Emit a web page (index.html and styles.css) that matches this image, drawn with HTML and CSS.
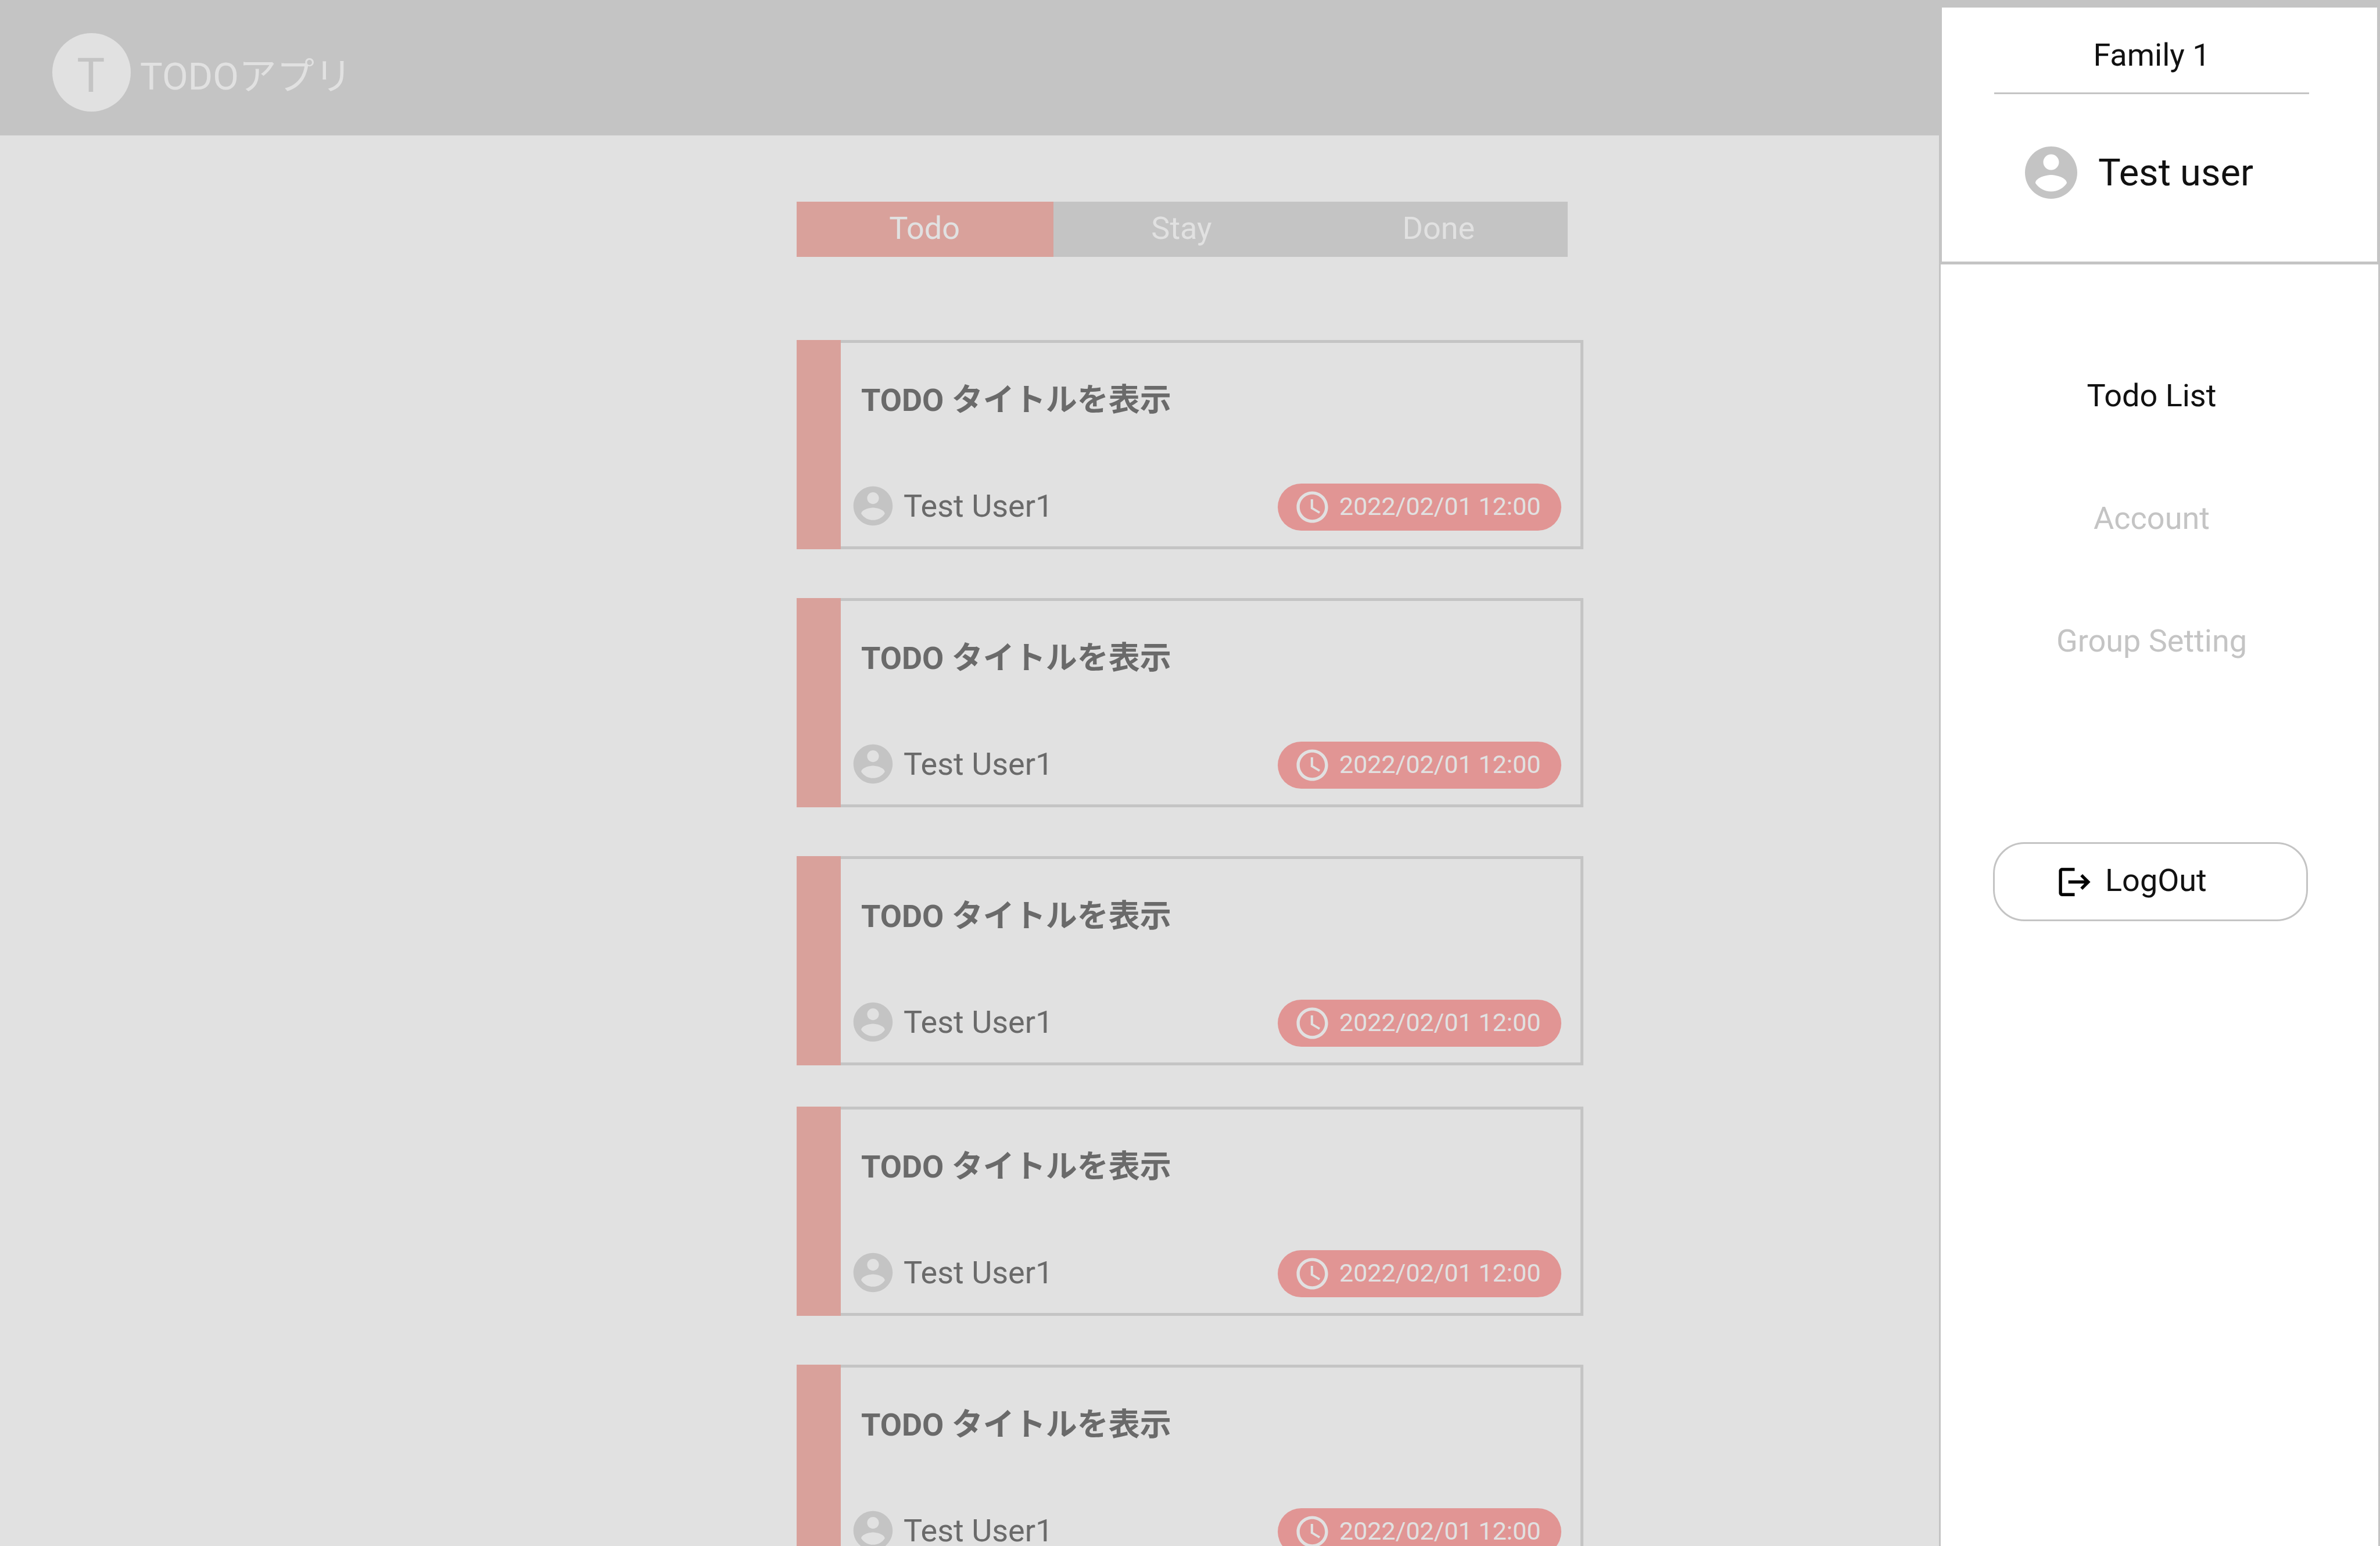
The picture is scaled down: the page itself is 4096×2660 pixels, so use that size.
FILE: index.html
```html
<!DOCTYPE html>
<html lang="ja">
<head>
<meta charset="utf-8">
<meta name="viewport" content="width=device-width, initial-scale=1">
<title>TODOアプリ</title>
<link rel="stylesheet" href="styles.css">
</head>
<body>
<svg class="sprite" aria-hidden="true">
  <symbol id="icon-account" viewBox="0 0 24 24"><path d="M12 2C6.48 2 2 6.48 2 12s4.48 10 10 10 10-4.48 10-10S17.52 2 12 2zm0 3c1.66 0 3 1.34 3 3s-1.340 3-3 3-3-1.340-3-3 1.340-3 3-3zm0 14.2c-2.500 0-4.710-1.280-6-3.220.03-1.990 4-3.080 6-3.080 1.990 0 5.970 1.090 6 3.080-1.290 1.940-3.500 3.220-6 3.220z"/></symbol>
  <symbol id="icon-clock" viewBox="0 0 24 24"><path d="M11.990 2C6.470 2 2 6.480 2 12s4.470 10 9.990 10C17.520 22 22 17.520 22 12S17.520 2 11.990 2zM12 20c-4.420 0-8-3.580-8-8s3.580-8 8-8 8 3.580 8 8-3.580 8-8 8zm.5-13H11v6l5.250 3.150.75-1.230-4.500-2.670z"/></symbol>
  <symbol id="icon-logout" viewBox="0 0 24 24"><path d="M17 7l-1.410 1.410L18.170 11H8v2h10.170l-2.580 2.580L17 17l5-5zM4 5h8V3H4c-1.100 0-2 .9-2 2v14c0 1.100.9 2 2 2h8v-2H4V5z"/></symbol>
</svg>

<div class="page">
  <header class="header">
    <span class="header__logo">T</span>
    <h1 class="header__title">TODOアプリ</h1>
  </header>

  <main class="board">
    <div class="tabs">
      <button class="tabs__item tabs__item--active" type="button">Todo</button>
      <button class="tabs__item" type="button">Stay</button>
      <button class="tabs__item" type="button">Done</button>
    </div>

    <div class="groups">
      <div class="group">
        <article class="card">
          <h2 class="card__title">TODO タイトルを表示</h2>
          <div class="card__row">
            <span class="user"><svg class="user__icon"><use href="#icon-account"/></svg>Test User1</span>
            <time class="due" datetime="2022-02-01T12:00"><svg class="due__icon"><use href="#icon-clock"/></svg><span class="due__text">2022/02/01 12:00</span></time>
          </div>
        </article>
        <article class="card">
          <h2 class="card__title">TODO タイトルを表示</h2>
          <div class="card__row">
            <span class="user"><svg class="user__icon"><use href="#icon-account"/></svg>Test User1</span>
            <time class="due" datetime="2022-02-01T12:00"><svg class="due__icon"><use href="#icon-clock"/></svg><span class="due__text">2022/02/01 12:00</span></time>
          </div>
        </article>
        <article class="card">
          <h2 class="card__title">TODO タイトルを表示</h2>
          <div class="card__row">
            <span class="user"><svg class="user__icon"><use href="#icon-account"/></svg>Test User1</span>
            <time class="due" datetime="2022-02-01T12:00"><svg class="due__icon"><use href="#icon-clock"/></svg><span class="due__text">2022/02/01 12:00</span></time>
          </div>
        </article>
      </div>
      <div class="group">
        <article class="card">
          <h2 class="card__title">TODO タイトルを表示</h2>
          <div class="card__row">
            <span class="user"><svg class="user__icon"><use href="#icon-account"/></svg>Test User1</span>
            <time class="due" datetime="2022-02-01T12:00"><svg class="due__icon"><use href="#icon-clock"/></svg><span class="due__text">2022/02/01 12:00</span></time>
          </div>
        </article>
        <article class="card">
          <h2 class="card__title">TODO タイトルを表示</h2>
          <div class="card__row">
            <span class="user"><svg class="user__icon"><use href="#icon-account"/></svg>Test User1</span>
            <time class="due" datetime="2022-02-01T12:00"><svg class="due__icon"><use href="#icon-clock"/></svg><span class="due__text">2022/02/01 12:00</span></time>
          </div>
        </article>
      </div>
    </div>
  </main>
</div>

<aside class="drawer">
  <section class="profile">
    <p class="profile__family">Family 1</p>
    <div class="profile__user"><svg class="profile__icon"><use href="#icon-account"/></svg>Test user</div>
  </section>
  <nav class="menu">
    <a class="menu__link menu__link--current" href="#todo" aria-current="page">Todo List</a>
    <a class="menu__link" href="#account">Account</a>
    <a class="menu__link" href="#group">Group Setting</a>
  </nav>
  <div class="drawer__foot">
    <button class="logout" type="button"><svg class="logout__icon"><use href="#icon-logout"/></svg><span class="logout__label">LogOut</span></button>
  </div>
</aside>
</body>
</html>
```
FILE: styles.css
```css
:root {
  --gray: #c4c4c4;
  --surface: #e1e1e1;
  --text-dim: #6a6a6a;
  --text: #111111;
  --accent: #d9a19b;
  --due: #e19594;
}

* {
  box-sizing: border-box;
}

body {
  margin: 0;
  background: var(--surface);
  color: var(--text);
  font-family: Roboto, "Noto Sans CJK JP", sans-serif;
  font-size: 54px;
  line-height: 64px;
}

h1,
h2,
p {
  margin: 0;
}

button {
  font: inherit;
  color: inherit;
}

svg {
  flex: none;
  fill: currentColor;
}

.sprite {
  position: absolute;
  width: 0;
  height: 0;
}

/* The page behind the open drawer does not scroll */
.page {
  height: 100vh;
  overflow: hidden;
}

.header {
  display: flex;
  align-items: center;
  gap: 16px;
  height: 233px;
  padding: 16px 90px 0;
  background: var(--gray);
  color: var(--surface);
}

.header__logo {
  display: flex;
  align-items: center;
  justify-content: center;
  width: 135px;
  height: 135px;
  padding: 13px 2px 0 0;
  border-radius: 50%;
  background: var(--surface);
  color: var(--gray);
  font-size: 81px;
}

.header__title {
  padding-top: 14px;
  font-size: 65px;
  font-weight: 400;
}

.board {
  width: 100%;
  max-width: 1354px;
  margin: 0 auto;
  padding-top: 114px;
}

.tabs {
  display: flex;
  margin-right: 27px;
  background: var(--gray);
}

.tabs__item {
  flex: 1;
  height: 95px;
  padding: 0 2px 4px 0;
  border: 0;
  background: none;
  color: var(--surface);
}

.tabs__item--active {
  background: var(--accent);
}

.groups {
  display: flex;
  flex-direction: column;
  gap: 71px;
  padding-top: 143px;
}

.group {
  display: flex;
  flex-direction: column;
  gap: 84px;
}

.card {
  display: flex;
  flex-direction: column;
  justify-content: space-between;
  min-height: 360px;
  padding: 67px 33px 26px 15px;
  border: 5px solid var(--gray);
  border-left: 0;
  color: var(--text-dim);
  position: relative;
  margin-left: 76px;
}

.card::before {
  content: "";
  position: absolute;
  top: -5px;
  bottom: -5px;
  right: 100%;
  width: 76px;
  background: var(--accent);
}

.card__title {
  padding-left: 20px;
  font-size: 54px;
  font-weight: 700;
}

.card__row {
  display: flex;
  align-items: center;
  justify-content: space-between;
}

.user {
  display: flex;
  align-items: center;
  gap: 12px;
  padding-bottom: 3px;
}

.user__icon {
  width: 81px;
  height: 81px;
  color: var(--gray);
}

.due {
  display: flex;
  align-items: center;
  gap: 14px;
  width: 488px;
  height: 81px;
  padding-left: 27px;
  border-radius: 41px;
  background: var(--due);
  color: var(--surface);
  font-size: 43px;
}

.due__icon {
  width: 65px;
  height: 65px;
}

.due__text {
  padding-bottom: 3px;
}

.drawer {
  position: fixed;
  top: 8px;
  right: 0;
  bottom: 0;
  width: 759px;
  border: solid var(--gray);
  border-width: 0 3px;
  background: #ffffff;
}

.profile {
  padding: 50px 117px 99px 90px;
  border: solid var(--gray);
  border-width: 5px 2px;
}

.profile__family {
  padding-bottom: 32px;
  border-bottom: 3px solid var(--gray);
  text-align: center;
}

.profile__user {
  display: flex;
  align-items: center;
  gap: 27px;
  padding: 81px 0 0 44px;
  font-size: 65px;
}

.profile__icon {
  width: 108px;
  height: 108px;
  color: var(--gray);
}

.menu {
  display: flex;
  flex-direction: column;
  align-items: center;
  gap: 147px;
  padding: 194px 119px 0 92px;
}

.menu__link {
  color: var(--gray);
  text-decoration: none;
}

.menu__link--current {
  color: var(--text);
}

.drawer__foot {
  padding: 314px 121px 0 90px;
}

.logout {
  display: flex;
  align-items: center;
  gap: 20px;
  width: 100%;
  height: 136px;
  padding: 0 0 0 105px;
  border: 3px solid var(--gray);
  border-radius: 54px;
  background: #ffffff;
}

.logout__icon {
  width: 65px;
  height: 65px;
  color: #000000;
}

.logout__label {
  padding-bottom: 4px;
}
```
